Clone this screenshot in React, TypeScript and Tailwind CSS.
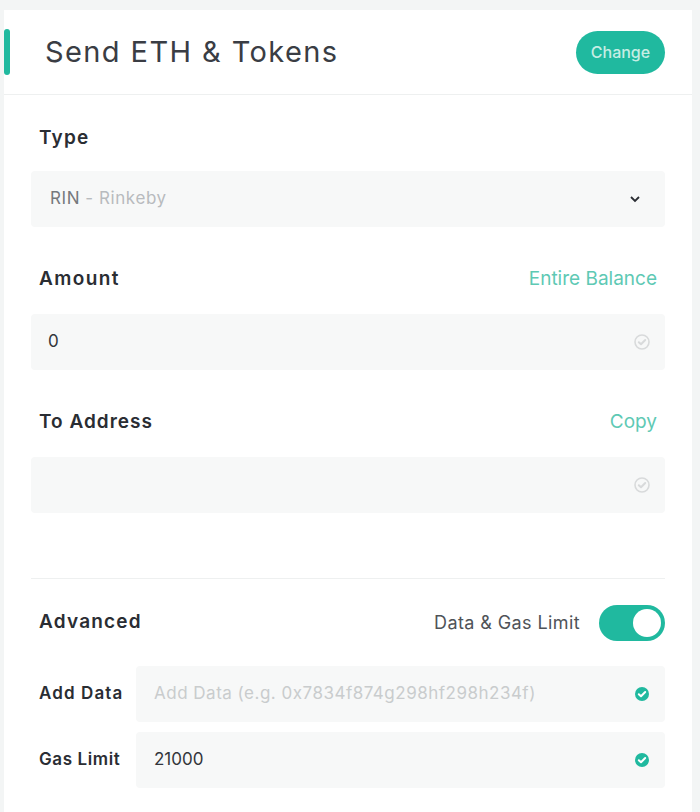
import React from "react";

function CheckCircle({ active }: { active: boolean }) {
  return (
    <svg width="16" height="16" viewBox="0 0 16 16">
      <circle cx="8" cy="8" r="7" fill={active ? "#20b99f" : "none"} stroke={active ? "#20b99f" : "#d8dadb"} strokeWidth={active ? 0 : 1.6} />
      <path d="M4.8 8.2 L7 10.3 L11.2 6" fill="none" stroke={active ? "#ffffff" : "#d8dadb"} strokeWidth="2" strokeLinecap="round" strokeLinejoin="round" />
    </svg>
  );
}

export default function App() {
  return (
    <div className="w-[700px] h-[812px] bg-[#f3f5f5] pt-[10px] pl-[4px] pr-[8px] overflow-hidden" style={{ fontFamily: "Inter, 'Noto Sans', sans-serif" }}>
      <div className="bg-white h-full">
        {/* Header */}
        <div className="flex items-center h-[85px] border-b border-[#eef0f0] pr-[27px]">
          <div className="w-[6px] h-[46px] bg-[#20b99f] rounded-sm" />
          <h1 className="ml-[35px] text-[29px] text-[#3a3d44] font-normal tracking-[1.4px] flex-1">Send ETH &amp; Tokens</h1>
          <button className="w-[89px] h-[43px] rounded-full bg-[#20b99f] text-[#c6ede4] text-[16px] font-medium">Change</button>
        </div>

        <div className="pl-[27px] pr-[27px]">
          {/* Type */}
          <div className="pt-[29px] pl-[8px] h-[76px]">
            <span className="text-[19px] font-semibold text-[#2a2d33] tracking-[1.2px]">Type</span>
          </div>
          <div className="h-[56px] bg-[#f7f8f8] rounded flex items-center pl-[19px] pr-[24px]">
            <span className="text-[17px] text-[#76797d] tracking-[0.6px]">RIN</span>
            <span className="text-[17px] text-[#b8bbbe] ml-[5px] tracking-[0.6px]">- Rinkeby</span>
            <span className="flex-1" />
            <svg width="12" height="8" viewBox="0 0 12 8"><path d="M2 2 L6 6 L10 2" fill="none" stroke="#2a2d33" strokeWidth="1.8" /></svg>
          </div>

          {/* Amount */}
          <div className="flex items-center justify-between h-[87px] pl-[8px] pr-[8px] pt-[18px]">
            <span className="text-[19px] font-semibold text-[#2a2d33] tracking-[1.4px]">Amount</span>
            <span className="text-[19px] text-[#5ec9b4]">Entire Balance</span>
          </div>
          <div className="h-[56px] bg-[#f7f8f8] rounded flex items-center pl-[17px] pr-[15px]">
            <span className="text-[17px] text-[#33363b] flex-1">0</span>
            <CheckCircle active={false} />
          </div>

          {/* To Address */}
          <div className="flex items-center justify-between h-[87px] pl-[8px] pr-[8px] pt-[18px]">
            <span className="text-[19px] font-semibold text-[#2a2d33] tracking-[1px]">To Address</span>
            <span className="text-[19px] text-[#5ec9b4]">Copy</span>
          </div>
          <div className="h-[56px] bg-[#f7f8f8] rounded flex items-center pl-[17px] pr-[15px]">
            <span className="flex-1" />
            <CheckCircle active={false} />
          </div>

          <div className="h-[66px] border-b border-[#eef0f0]" />

          {/* Advanced */}
          <div className="flex items-center h-[87px] pl-[8px] pr-0">
            <span className="text-[19px] font-semibold text-[#2a2d33] flex-1 tracking-[1.2px]">Advanced</span>
            <span className="text-[18px] text-[#4f5358] mr-[19px] tracking-[0.4px]">Data &amp; Gas Limit</span>
            <div className="w-[66px] h-[36px] rounded-full bg-[#20b99f] flex items-center justify-end pr-[4px]">
              <div className="w-[28px] h-[28px] rounded-full bg-white" />
            </div>
          </div>

          <div className="flex items-center h-[56px]">
            <span className="w-[105px] pl-[8px] text-[17px] font-semibold text-[#2a2d33] tracking-[1.1px] whitespace-nowrap">Add Data</span>
            <div className="flex-1 h-full bg-[#f7f8f8] rounded flex items-center pl-[18px] pr-[15px]">
              <span className="flex-1 text-[17px] text-[#c9cccd] tracking-[0.5px] whitespace-nowrap">Add Data (e.g. 0x7834f874g298hf298h234f)</span>
              <CheckCircle active={true} />
            </div>
          </div>
          <div className="flex items-center h-[56px] mt-[10px]">
            <span className="w-[105px] pl-[8px] text-[17px] font-semibold text-[#2a2d33] tracking-[0.6px] whitespace-nowrap">Gas Limit</span>
            <div className="flex-1 h-full bg-[#f7f8f8] rounded flex items-center pl-[18px] pr-[15px]">
              <span className="flex-1 text-[17px] text-[#33363b]">21000</span>
              <CheckCircle active={true} />
            </div>
          </div>
        </div>
      </div>
    </div>
  );
}
